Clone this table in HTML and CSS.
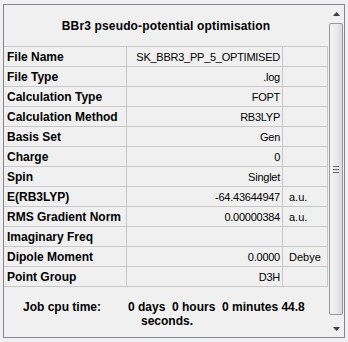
FILE: index.html
```html
<!DOCTYPE html>
<html>
<head>
<meta charset="utf-8">
<link rel="stylesheet" href="styles.css">
</head>
<body>
<div class="frame">
  <div class="pane">
    <div class="title">BBr3 pseudo-potential optimisation</div>
    <div class="grid">
      <div class="k">File Name</div><div class="v">SK_BBR3_PP_5_OPTIMISED</div><div class="u"></div>
      <div class="k">File Type</div><div class="v">.log</div><div class="u"></div>
      <div class="k">Calculation Type</div><div class="v">FOPT</div><div class="u"></div>
      <div class="k">Calculation Method</div><div class="v">RB3LYP</div><div class="u"></div>
      <div class="k">Basis Set</div><div class="v">Gen</div><div class="u"></div>
      <div class="k">Charge</div><div class="v">0</div><div class="u"></div>
      <div class="k">Spin</div><div class="v">Singlet</div><div class="u"></div>
      <div class="k">E(RB3LYP)</div><div class="v">-64.43644947</div><div class="u">a.u.</div>
      <div class="k">RMS Gradient Norm</div><div class="v">0.00000384</div><div class="u">a.u.</div>
      <div class="k">Imaginary Freq</div><div class="v"></div><div class="u"></div>
      <div class="k">Dipole Moment</div><div class="v">0.0000</div><div class="u">Debye</div>
      <div class="k">Point Group</div><div class="v">D3H</div><div class="u"></div>
    </div>
    <div class="footer">
      <div class="flabel">Job cpu time:</div>
      <div class="fvalue">
        <span class="line1">0 days  0 hours  0 minutes 44.8</span>
        <span class="line2">seconds.</span>
      </div>
    </div>
  </div>
  <div class="scrollbar">
    <div class="sbtn">
      <svg width="7" height="4" viewBox="0 0 7 4"><path d="M3.5 0 L7 4 L0 4 Z" fill="#3c3c3c"/></svg>
    </div>
    <div class="thumb">
      <svg width="6" height="7" viewBox="0 0 6 7"><path d="M0 0.5H6M0 3.5H6M0 6.5H6" stroke="#6a6a6a" stroke-width="1"/></svg>
    </div>
    <div class="sbtn">
      <svg width="7" height="4" viewBox="0 0 7 4"><path d="M0 0 L7 0 L3.5 4 Z" fill="#3c3c3c"/></svg>
    </div>
  </div>
</div>
</body>
</html>
```
FILE: styles.css
```css
html, body {
  margin: 0;
  padding: 0;
  background: #f0f0f0;
}

body {
  font-family: "Liberation Sans", Arial, sans-serif;
  color: #000;
}

.frame {
  margin: 4px 0 0 3px;
  width: 342px;
  height: 334px;
  box-sizing: border-box;
  border: 1px solid #828790;
  display: flex;
  background: #f0f0f0;
}

.pane {
  width: 324px;
  display: flex;
  flex-direction: column;
}

.title {
  height: 41px;
  display: flex;
  align-items: center;
  justify-content: center;
  font-weight: bold;
  font-size: 12px;
  letter-spacing: 0.15px;
  padding-top: 1px;
  box-sizing: border-box;
}

.grid {
  display: grid;
  grid-template-columns: 123px 156px 45px;
  grid-auto-rows: 20px;
  border-top: 1px solid #c8c8c8;
}

.grid > div {
  box-sizing: border-box;
  border-right: 1px solid #c8c8c8;
  border-bottom: 1px solid #c8c8c8;
  display: flex;
  align-items: center;
  white-space: nowrap;
  overflow: hidden;
}

.k {
  font-weight: bold;
  font-size: 12px;
  padding-left: 3px;
}

.v {
  font-size: 11px;
  letter-spacing: -0.25px;
  justify-content: flex-end;
  padding-right: 2px;
}

.u {
  font-size: 11px;
  padding-left: 6px;
}

.footer {
  display: flex;
  padding: 13px 0 0 19px;
  font-weight: bold;
  font-size: 12px;
  line-height: 14px;
}

.flabel {
  width: 105px;
}

.fvalue span {
  display: block;
  white-space: pre;
}

.fvalue .line2 {
  padding-left: 13px;
}

.scrollbar {
  width: 16px;
  display: flex;
  flex-direction: column;
  background: #f0f0f0;
}

.sbtn {
  height: 17px;
  display: flex;
  align-items: center;
  justify-content: center;
}

.sbtn svg {
  display: block;
}

.thumb {
  flex: 1;
  margin: 1px 1px 5px 1px;
  border: 1px solid #9a9a9a;
  border-radius: 2px;
  background: linear-gradient(to right, #f4f4f4 0%, #ebebeb 50%, #dadada 100%);
  display: flex;
  align-items: center;
  justify-content: center;
}

.thumb svg {
  display: block;
}
```
